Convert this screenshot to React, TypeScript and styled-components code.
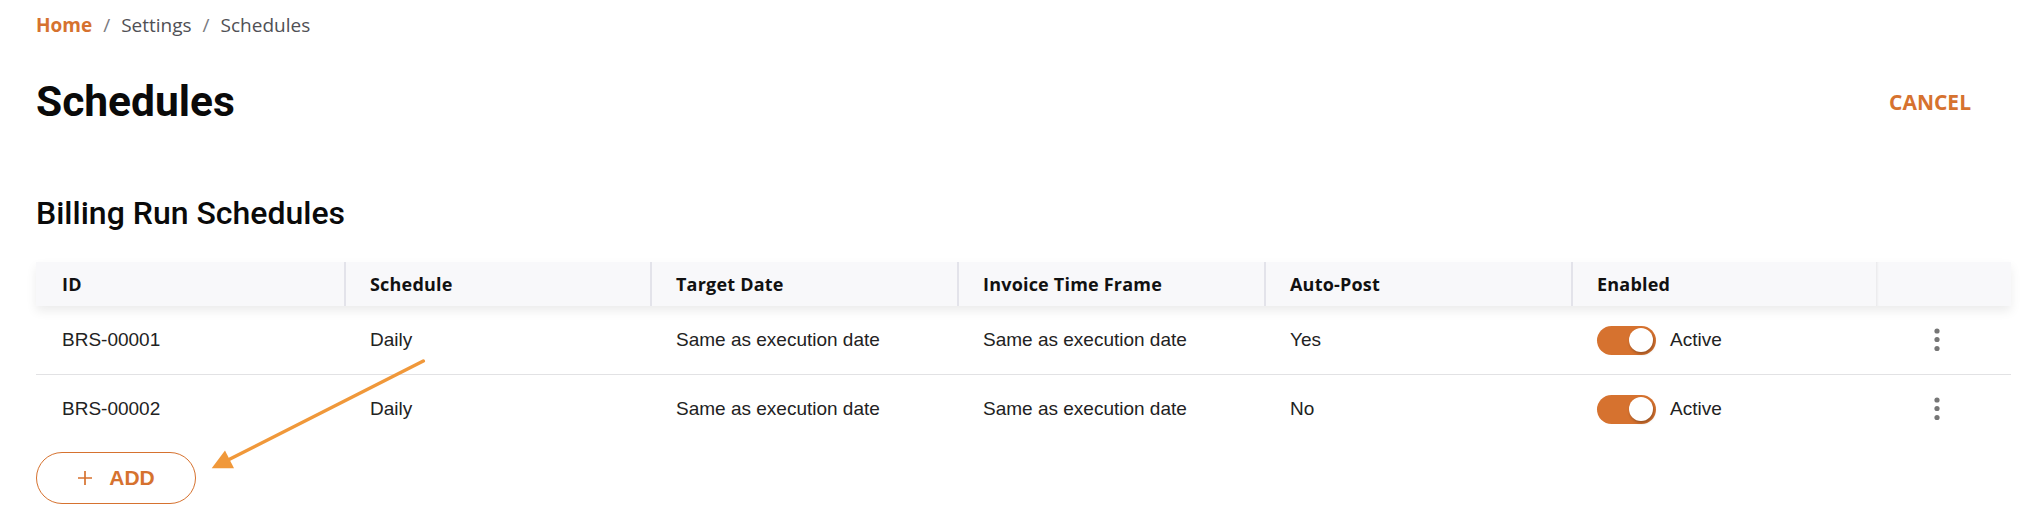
import React from "react";
import styled, { createGlobalStyle } from "styled-components";

const ORANGE = "#d6722f";

const GlobalStyle = createGlobalStyle`
  html, body {
    margin: 0;
    padding: 0;
    background: #ffffff;
  }
  * { box-sizing: border-box; }
`;

const Page = styled.div`
  position: relative;
  width: 2038px;
  min-height: 522px;
  padding: 12px 27px 20px 36px;
  font-family: "Liberation Sans", Arial, sans-serif;
  color: #222;
`;

const Breadcrumb = styled.nav`
  display: flex;
  align-items: center;
  gap: 11px;
  font-family: "Open Sans", "Noto Sans", sans-serif;
  font-size: 19px;
  line-height: 26px;
  height: 26px;
`;

const Crumb = styled.span<{ $home?: boolean }>`
  color: ${(p) => (p.$home ? ORANGE : "#505055")};
  font-weight: ${(p) => (p.$home ? 700 : 400)};
`;

const CrumbSep = styled.span`
  color: #7a7a80;
`;

const TitleRow = styled.div`
  display: flex;
  align-items: center;
  justify-content: space-between;
  margin-top: 38px;
`;

const Title = styled.h1`
  margin: 0;
  font-family: Roboto, "Liberation Sans", sans-serif;
  font-weight: 700;
  font-size: 42.5px;
  line-height: 52px;
  color: #0a0a0a;
`;

const CancelButton = styled.button`
  border: none;
  background: transparent;
  padding: 8px 0;
  margin-right: 40px;
  font-family: "Open Sans", "Noto Sans", sans-serif;
  font-weight: 700;
  font-size: 21px;
  line-height: 28px;
  color: ${ORANGE};
  cursor: pointer;
`;

const SectionTitle = styled.h2`
  margin: 67px 0 0;
  font-family: Roboto, "Liberation Sans", sans-serif;
  font-weight: 500;
  font-size: 32px;
  line-height: 36px;
  color: #0a0a0a;
`;

const Table = styled.div`
  margin-top: 31px;
  display: flex;
  flex-direction: column;
`;

const COLUMNS = "308px 306px 307px 307px 307px 305px 1fr";

const HeaderRow = styled.div`
  display: grid;
  grid-template-columns: ${COLUMNS};
  height: 44px;
  background: #f8f8fa;
  box-shadow: 0 5px 10px rgba(0, 0, 0, 0.08);
  position: relative;
  z-index: 1;
`;

const HeaderCell = styled.div<{ $divider?: boolean; $sticky?: boolean }>`
  display: flex;
  align-items: center;
  padding-left: 26px;
  font-family: "Open Sans", "Noto Sans", sans-serif;
  font-weight: 700;
  font-size: 18px;
  letter-spacing: 0.2px;
  color: #111;
  box-shadow: ${(p) =>
    p.$sticky
      ? "inset 3px 0 3px -2px rgba(0,0,0,0.08)"
      : p.$divider
      ? "inset 2px 0 0 #e3e3ea"
      : "none"};
`;

const BodyRow = styled.div<{ $last?: boolean }>`
  display: grid;
  grid-template-columns: ${COLUMNS};
  height: ${(p) => (p.$last ? "68px" : "69px")};
  border-bottom: ${(p) => (p.$last ? "none" : "1px solid #e2e2e4")};
`;

const Cell = styled.div<{ $center?: boolean }>`
  display: flex;
  align-items: center;
  justify-content: ${(p) => (p.$center ? "center" : "flex-start")};
  padding-left: ${(p) => (p.$center ? "0" : "26px")};
  padding-right: ${(p) => (p.$center ? "14px" : "0")};
  font-family: "Liberation Sans", Arial, sans-serif;
  font-size: 19px;
  color: #222;
`;

const ToggleTrack = styled.span<{ $on: boolean }>`
  display: inline-flex;
  align-items: center;
  justify-content: ${(p) => (p.$on ? "flex-end" : "flex-start")};
  width: 59px;
  height: 29px;
  padding: 0 3px;
  border-radius: 15px;
  background: ${(p) => (p.$on ? ORANGE : "#c8c8cc")};
`;

const ToggleKnob = styled.span`
  width: 24px;
  height: 24px;
  border-radius: 50%;
  background: #ffffff;
  box-shadow: 1px 2px 3px rgba(0, 0, 0, 0.28);
`;

const StatusLabel = styled.span`
  margin-left: 14px;
  font-family: "Liberation Sans", Arial, sans-serif;
  font-size: 19px;
  color: #222;
`;

const KebabButton = styled.button`
  border: none;
  background: transparent;
  padding: 4px;
  display: flex;
  cursor: pointer;
`;

const AddButton = styled.button`
  margin-top: 9px;
  width: 160px;
  height: 52px;
  border: 1px solid ${ORANGE};
  border-radius: 26px;
  background: #fff;
  display: flex;
  align-items: center;
  justify-content: center;
  gap: 16px;
  font-family: "Liberation Sans", Arial, sans-serif;
  font-weight: 700;
  font-size: 21px;
  color: ${ORANGE};
  cursor: pointer;
`;

const ArrowOverlay = styled.svg`
  position: absolute;
  left: 205px;
  top: 355px;
  width: 225px;
  height: 120px;
  pointer-events: none;
  overflow: visible;
`;

const Kebab = () => (
  <svg width="6" height="24" viewBox="0 0 6 24">
    <circle cx="3" cy="3" r="2.6" fill="#767676" />
    <circle cx="3" cy="11.5" r="2.6" fill="#767676" />
    <circle cx="3" cy="20.5" r="2.6" fill="#767676" />
  </svg>
);

const PlusIcon = () => (
  <svg width="16" height="16" viewBox="0 0 16 16">
    <path d="M8 1 V15 M1 8 H15" stroke={ORANGE} strokeWidth="1.7" fill="none" />
  </svg>
);

const rows = [
  { id: "BRS-00001", schedule: "Daily", target: "Same as execution date", frame: "Same as execution date", auto: "Yes" },
  { id: "BRS-00002", schedule: "Daily", target: "Same as execution date", frame: "Same as execution date", auto: "No" },
];

const headers = ["ID", "Schedule", "Target Date", "Invoice Time Frame", "Auto-Post", "Enabled"];

export default function App() {
  return (
    <>
      <GlobalStyle />
      <Page>
        <Breadcrumb>
          <Crumb $home>Home</Crumb>
          <CrumbSep>/</CrumbSep>
          <Crumb>Settings</Crumb>
          <CrumbSep>/</CrumbSep>
          <Crumb>Schedules</Crumb>
        </Breadcrumb>

        <TitleRow>
          <Title>Schedules</Title>
          <CancelButton>CANCEL</CancelButton>
        </TitleRow>

        <SectionTitle>Billing Run Schedules</SectionTitle>

        <Table>
          <HeaderRow>
            {headers.map((h, i) => (
              <HeaderCell key={h} $divider={i > 0}>
                {h}
              </HeaderCell>
            ))}
            <HeaderCell $sticky />
          </HeaderRow>
          {rows.map((r, i) => (
            <BodyRow key={r.id} $last={i === rows.length - 1}>
              <Cell>{r.id}</Cell>
              <Cell>{r.schedule}</Cell>
              <Cell>{r.target}</Cell>
              <Cell>{r.frame}</Cell>
              <Cell>{r.auto}</Cell>
              <Cell>
                <ToggleTrack $on>
                  <ToggleKnob />
                </ToggleTrack>
                <StatusLabel>Active</StatusLabel>
              </Cell>
              <Cell $center>
                <KebabButton aria-label="More actions">
                  <Kebab />
                </KebabButton>
              </Cell>
            </BodyRow>
          ))}
        </Table>

        <AddButton>
          <PlusIcon />
          <span>ADD</span>
        </AddButton>

        <ArrowOverlay viewBox="0 0 225 120">
          <line x1="218.3" y1="6" x2="24.5" y2="104.3" stroke="#f0983a" strokeWidth="3.5" strokeLinecap="round" />
          <polygon points="6.7,113.3 29,113.2 20,95.4" fill="#f0983a" />
        </ArrowOverlay>
      </Page>
    </>
  );
}
